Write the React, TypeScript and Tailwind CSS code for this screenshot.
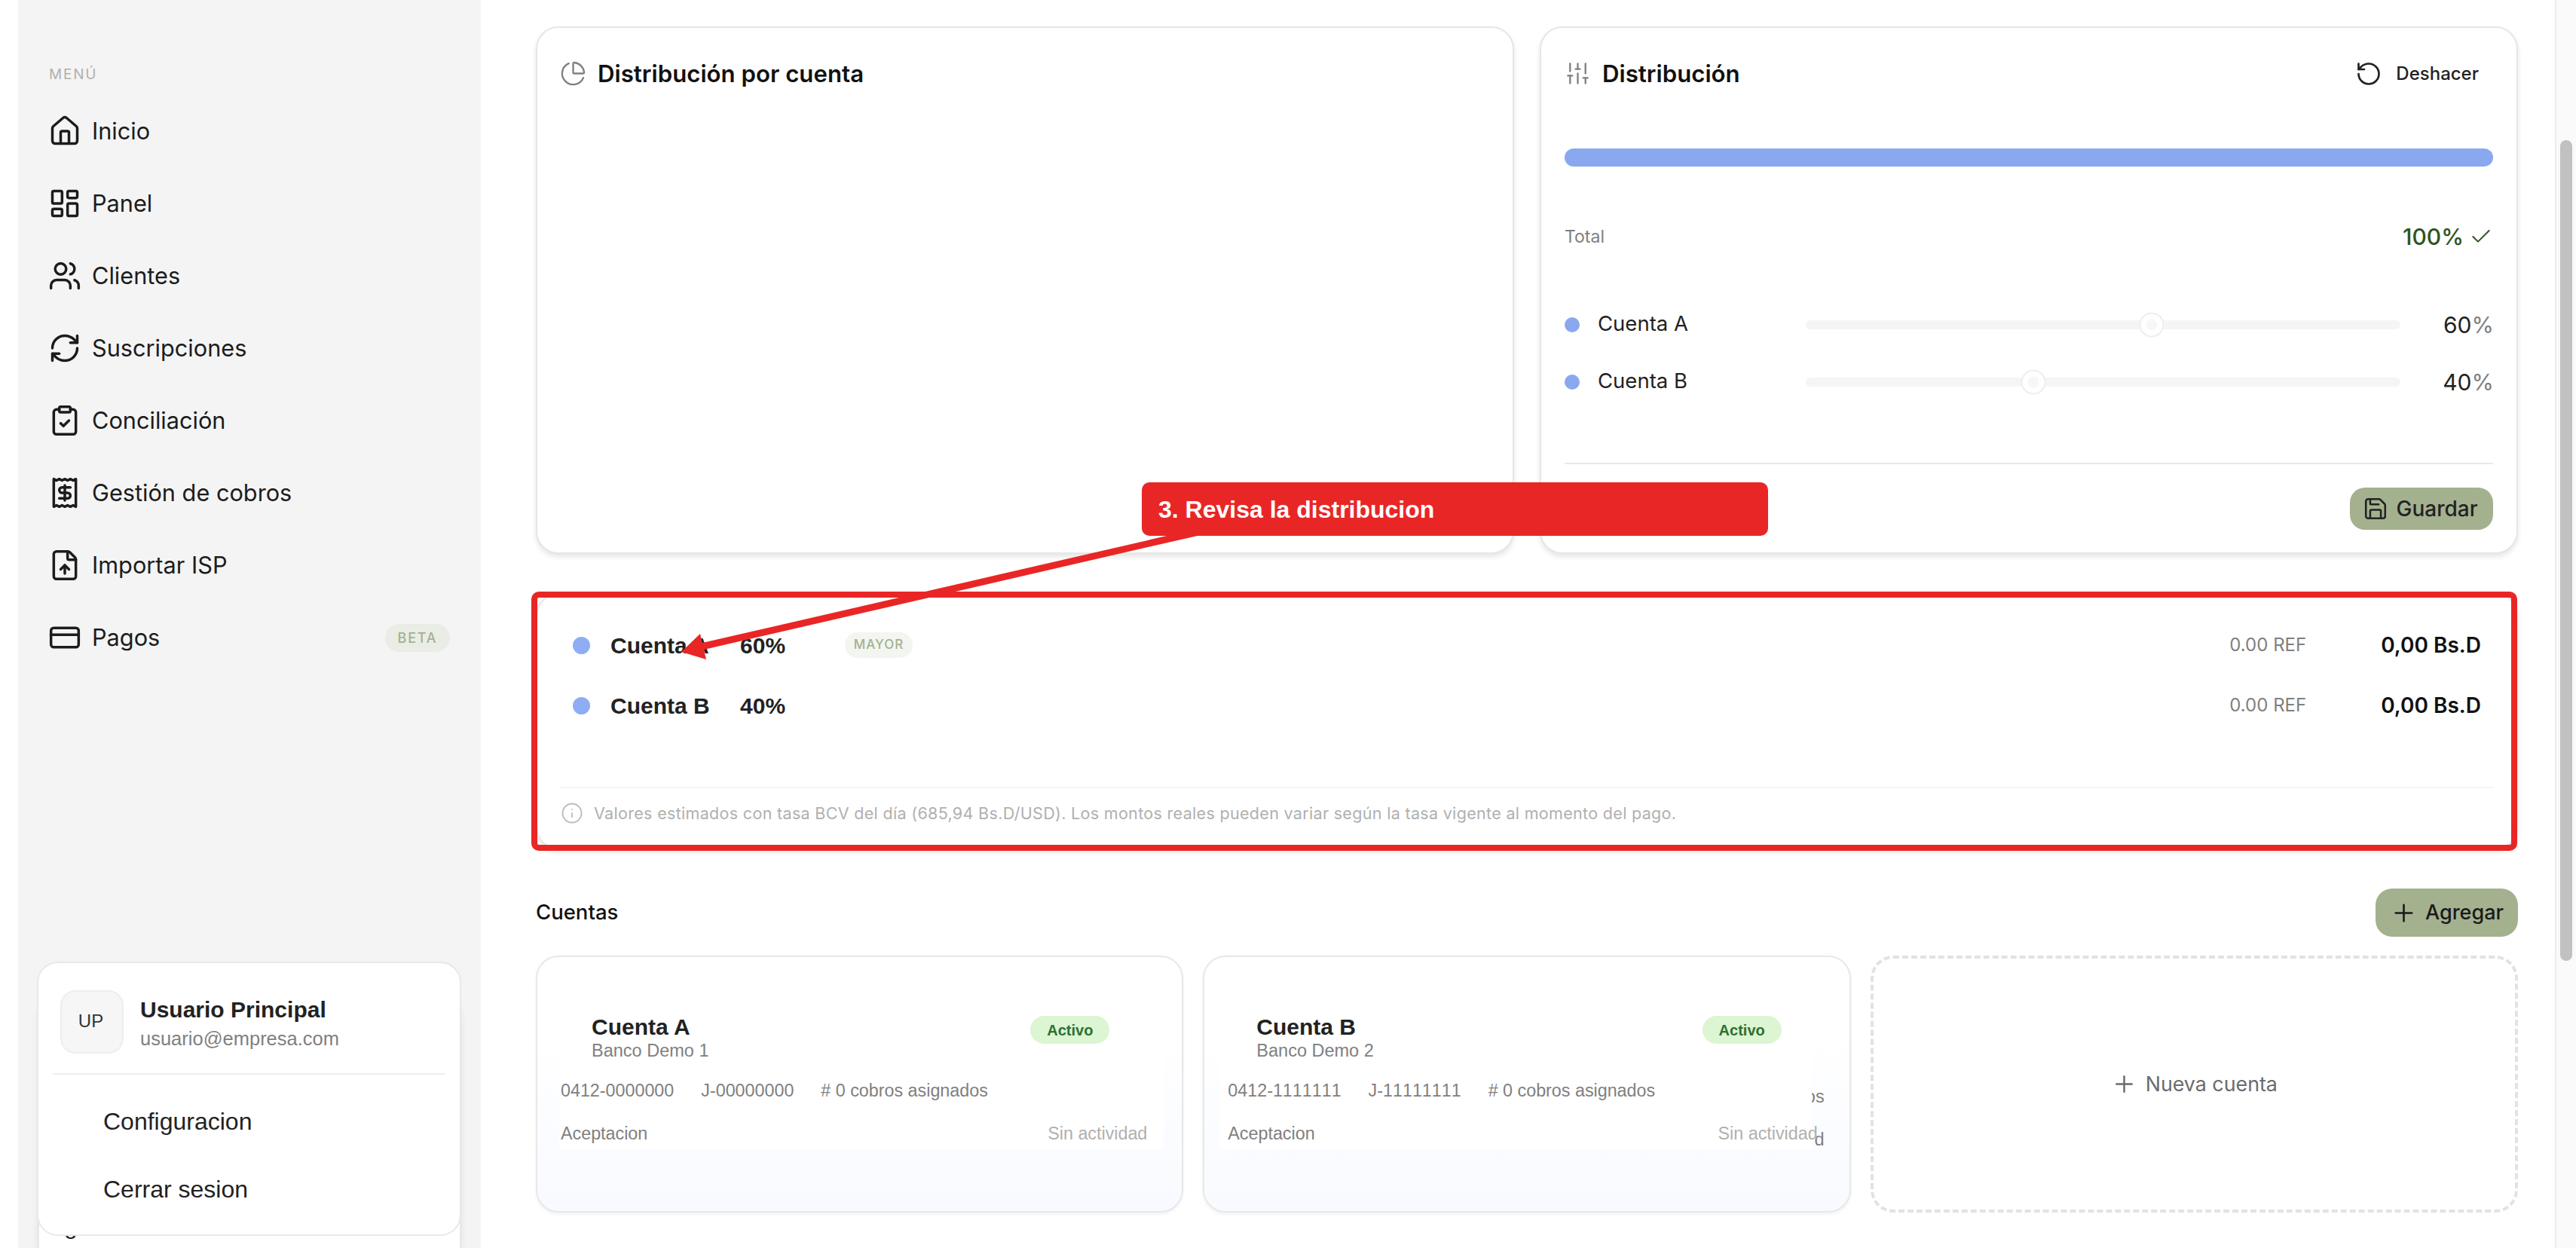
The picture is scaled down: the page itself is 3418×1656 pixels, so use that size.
import React from "react";
import {
  ChartPie,
  Check,
  ClipboardCheck,
  CreditCard,
  FileUp,
  House,
  Info,
  LayoutDashboard,
  Plus,
  Receipt,
  RefreshCw,
  RotateCcw,
  Save,
  SlidersVertical,
  Users,
} from "lucide-react";

const NAV = [
  { label: "Inicio", icon: House },
  { label: "Panel", icon: LayoutDashboard },
  { label: "Clientes", icon: Users },
  { label: "Suscripciones", icon: RefreshCw },
  { label: "Conciliación", icon: ClipboardCheck },
  { label: "Gestión de cobros", icon: Receipt },
  { label: "Importar ISP", icon: FileUp },
  { label: "Pagos", icon: CreditCard, beta: true },
];

const SPLITS = [
  { name: "Cuenta A", pct: 60, thumb: "58.2%", major: true },
  { name: "Cuenta B", pct: 40, thumb: "38.3%", major: false },
];

const ACCOUNTS = [
  {
    name: "Cuenta A",
    bank: "Banco Demo 1",
    phone: "0412-0000000",
    rif: "J-00000000",
    block: "ml-[29px] mr-[24px] pl-[2px] pr-[22px]",
    head: "pl-[41px] pr-[50px]",
    ghost: false,
  },
  {
    name: "Cuenta B",
    bank: "Banco Demo 2",
    phone: "0412-1111111",
    rif: "J-11111111",
    block: "ml-[20px] mr-[50px] pl-[11px] pr-0",
    head: "pl-[38px] pr-[40px]",
    ghost: true,
  },
];

function Sidebar() {
  return (
    <aside className="relative ml-[24px] flex h-full w-[614px] shrink-0 flex-col bg-[#f4f4f4] font-['Inter',sans-serif]">
      <div className="flex h-[126px] items-end pb-[16px] pl-[41px] text-[19px] leading-[22px] tracking-[1.8px] text-[#b0b0b0]">
        MENÚ
      </div>
      <nav className="flex flex-col pl-[40px] pr-[41px]">
        {NAV.map((item) => (
          <div key={item.label} className="flex h-[96px] items-center gap-[14px] text-[30.7px] text-[#1c1c1c]">
            <item.icon className="size-[44px] shrink-0" strokeWidth={1.9} />
            <span className="flex-1">{item.label}</span>
            {item.beta && (
              <span className="flex h-[37px] w-[86px] items-center justify-center rounded-full bg-[#e9ede6] text-[18px] font-medium tracking-[1.8px] text-[#a3b18f]">
                BETA
              </span>
            )}
          </div>
        ))}
      </nav>

      {/* chip del usuario, queda detras del menu abierto */}
      <div className="absolute inset-x-[26px] bottom-0 top-[1322px] rounded-t-[28px] border-2 border-b-0 border-[#e8e8e8] bg-white shadow-[0_2px_10px_rgba(0,0,0,0.08)]">
        <span className="absolute left-[33px] top-[284px] font-['Liberation_Sans',sans-serif] text-[32px] leading-[36px] text-[#222]">
          g
        </span>
      </div>

      <div className="absolute left-[25px] top-[1276px] flex h-[364px] w-[563px] flex-col rounded-[28px] border-2 border-[#e8e8e8] bg-white px-[19px] font-['Liberation_Sans',sans-serif]">
        <div className="flex h-[148px] items-center gap-[22px] border-b-2 border-[#eeeeee] pl-[10px] pb-[2px] pt-[12px]">
          <div className="flex size-[84px] items-center justify-center rounded-[20px] border-2 border-[#eeeeee] bg-[#f6f6f6] pb-[3px] pr-[3px] text-[24px] text-[#333]">
            UP
          </div>
          <div className="flex flex-col gap-[5px] pt-[2px]">
            <span className="text-[30px] font-bold leading-[36px] text-[#222]">Usuario Principal</span>
            <span className="text-[25.5px] leading-[30px] text-[#808080]">usuario@empresa.com</span>
          </div>
        </div>
        <div className="flex h-[90px] items-center pl-[67px] pt-[34px] text-[32px] text-[#222]">Configuracion</div>
        <div className="flex h-[90px] items-center pl-[67px] pt-[34px] text-[32px] text-[#222]">Cerrar sesion</div>
      </div>
    </aside>
  );
}

function CardHeader({ icon: Icon, title }: { icon: typeof ChartPie; title: string }) {
  return (
    <div className="flex items-center gap-[15px]">
      <Icon className="size-[35px] text-[#808080]" strokeWidth={1.6} />
      <span className="text-[31.2px] font-semibold text-[#111]">{title}</span>
    </div>
  );
}

function DistributionEditor() {
  return (
    <div className="flex flex-col rounded-[30px] border-2 border-[#e6e6e6] bg-white px-[31px] shadow-[0_4px_7px_rgba(0,0,0,0.1)]">
      <div className="flex h-[122px] items-center justify-between">
        <CardHeader icon={SlidersVertical} title="Distribución" />
        <div className="flex items-center gap-[18px] pr-[19px] text-[24px] font-medium text-[#222]">
          <RotateCcw className="size-[36px]" strokeWidth={1.8} />
          Deshacer
        </div>
      </div>
      <div className="mt-[38px] h-[24px] rounded-full bg-[#8aa8ef]" />
      <div className="mt-[73px] flex h-[40px] items-center justify-between">
        <span className="text-[23px] text-[#808080]">Total</span>
        <span className="flex items-center gap-[7px] text-[30px] font-medium text-[#2f5420]">
          100%
          <Check className="size-[32px]" strokeWidth={1.5} />
        </span>
      </div>
      <div className="mt-[77px] flex flex-col gap-[36px]">
        {SPLITS.map((s) => (
          <div key={s.name} className="flex h-[40px] items-center">
            <span className="size-[20px] rounded-full bg-[#8aa8ef]" />
            <span className="ml-[24px] w-[276px] pb-[3px] text-[27.5px] text-[#222]">{s.name}</span>
            <div className="relative h-[12px] flex-1 rounded-full bg-[#f5f5f5]">
              <span
                className="absolute top-1/2 size-[33px] -translate-x-1/2 -translate-y-1/2 rounded-full border-2 border-[#eeeeee] bg-white"
                style={{ left: s.thumb }}
              >
                <span className="absolute inset-[7px] rounded-full bg-[#f7f7f7]" />
              </span>
            </div>
            <span className="-mr-[1px] w-[124px] text-right text-[30px] text-[#222]">
              {s.pct}
              <span className="text-[#808080]">%</span>
            </span>
          </div>
        ))}
      </div>
      <div className="mt-[87px] h-[2px] bg-[#e8e8e8]" />
      <div className="mt-[31px] flex justify-end">
        <div className="flex h-[56px] w-[190px] items-center justify-center gap-[10px] rounded-[20px] bg-[#a3b18f] pr-[3px] text-[28px] font-medium text-[#222]">
          <Save className="size-[34px]" strokeWidth={1.8} />
          Guardar
        </div>
      </div>
    </div>
  );
}

function Summary() {
  return (
    <div className="relative mt-[52px] flex h-[340px] flex-col rounded-[30px] border-2 border-[#e8e8e8] bg-white px-[31px] pt-[43px] shadow-[0_4px_8px_rgba(0,0,0,0.1)]">
      <div className="flex flex-col gap-[32px] px-[16px] font-['Liberation_Sans',sans-serif]">
        {SPLITS.map((s) => (
          <div key={s.name} className="flex h-[48px] items-center">
            <span className="size-[23px] rounded-full bg-[#8fadf5]" />
            <span className="ml-[27px] w-[172px] text-[30px] font-bold text-[#222]">{s.name}</span>
            <span className="w-[60px] text-[30px] font-bold text-[#222]">{s.pct}%</span>
            {s.major && (
              <span className="ml-[79px] flex h-[34px] w-[90px] items-center justify-center rounded-full bg-[#f3f5f1] font-['Inter',sans-serif] text-[17px] font-medium tracking-[1px] text-[#a3b18f]">
                MAYOR
              </span>
            )}
            <span className="ml-auto font-['Inter',sans-serif] text-[24px] text-[#808080]">0.00 REF</span>
            <span className="ml-[99px] font-['Inter',sans-serif] text-[28px] font-semibold text-[#111]">0,00 Bs.D</span>
          </div>
        ))}
      </div>
      <div className="mt-[84px] h-[2px] bg-[#f4f4f4]" />
      <div className="mt-[13px] flex h-[40px] items-center gap-[14px] text-[21.5px] tracking-[0.32px] text-[#b0b0b0]">
        <Info className="size-[30px] shrink-0 text-[#bbbbbb]" strokeWidth={1.5} />
        Valores estimados con tasa BCV del día (685,94 Bs.D/USD). Los montos reales pueden variar según la tasa vigente al momento del pago.
      </div>
    </div>
  );
}

function AccountCard({ account }: { account: (typeof ACCOUNTS)[number] }) {
  return (
    <div className="relative h-[341px] rounded-[30px] border-2 border-[#e8e8e8] bg-linear-to-b from-white from-30% to-[#f8faff] pt-[50px] font-['Liberation_Sans',sans-serif] shadow-[0_2px_4px_rgba(0,0,0,0.06)]">
      {account.ghost && (
        <>
          <span className="absolute right-[33px] top-[168px] text-[23.5px] text-[#808080]">os</span>
          <span className="absolute right-[33px] top-[225px] text-[23.5px] text-[#808080]">d</span>
        </>
      )}
      <div className={`relative flex h-[205px] flex-col bg-white pt-[26px] ${account.block}`}>
        <div className={`flex items-start justify-between ${account.head}`}>
          <div className="flex flex-col">
            <span className="text-[30px] font-bold leading-[34px] text-[#222]">{account.name}</span>
            <span className="text-[23.5px] leading-[28px] text-[#808080]">{account.bank}</span>
          </div>
          <span className="mt-[2px] flex h-[37px] w-[105px] items-center justify-center rounded-full bg-[#dcf5d3] text-[20px] font-bold text-[#2f6f2f]">
            Activo
          </span>
        </div>
        <div className="mt-[24px] flex h-[30px] items-center gap-[36px] text-[23.3px] text-[#808080] [font-kerning:none]">
          <span>{account.phone}</span>
          <span>{account.rif}</span>
          <span># 0 cobros asignados</span>
        </div>
        <div className={`mt-[27px] flex h-[30px] items-center justify-between text-[23.3px] ${account.ghost ? "-mr-[8px]" : ""}`}>
          <span className="text-[#808080]">Aceptacion</span>
          <span className="text-[#b0b0b0]">Sin actividad</span>
        </div>
      </div>
    </div>
  );
}

export default function App() {
  return (
    <div className="relative flex h-[1656px] w-[3418px] overflow-hidden bg-white font-['Inter',sans-serif]">
      <Sidebar />

      <main className="flex-1 pl-[73px] pr-[49px] pt-[35px]">
        <div className="grid h-[700px] grid-cols-2 gap-[34px]">
          <div className="rounded-[30px] border-2 border-[#e6e6e6] bg-white pl-[30px] shadow-[0_4px_7px_rgba(0,0,0,0.1)]">
            <div className="flex h-[122px] items-center">
              <CardHeader icon={ChartPie} title="Distribución por cuenta" />
            </div>
          </div>
          <DistributionEditor />
        </div>

        <Summary />

        <div className="mt-[52px] flex h-[64px] items-center justify-between">
          <span className="text-[27.5px] font-medium text-[#111]">Cuentas</span>
          <div className="flex h-[64px] w-[189px] items-center justify-center gap-[10px] rounded-[22px] bg-[#a3b18f] text-[27px] font-medium text-[#1a1a1a]">
            <Plus className="size-[37px]" strokeWidth={1.7} />
            Agregar
          </div>
        </div>

        <div className="mt-[25px] grid grid-cols-3 gap-[26px]">
          {ACCOUNTS.map((a) => (
            <AccountCard key={a.name} account={a} />
          ))}
          <div className="flex h-[341px] items-center justify-center gap-[11px] rounded-[30px] border-[4px] border-dashed border-[#e2e2e2] text-[26.8px] text-[#6b6b6b]">
            <Plus className="size-[35px]" strokeWidth={1.7} />
            Nueva cuenta
          </div>
        </div>
      </main>

      {/* barra de scroll */}
      <div className="w-[28px] shrink-0 border-l-2 border-[#ececec] bg-[#fafafa] pl-[5px] pt-[186px]">
        <div className="h-[1089px] w-[16px] rounded-full bg-[#c1c1c1]" />
      </div>

      {/* anotacion del tutorial */}
      <div className="pointer-events-none absolute left-[705px] top-[785px] h-[344px] w-[2635px] rounded-[10px] border-[8px] border-[#e92626]" />
      <svg className="pointer-events-none absolute left-0 top-0" width="3418" height="1656">
        <line x1="1590" y1="706" x2="922" y2="860" stroke="#e92626" strokeWidth="9" />
        <polygon points="904,865 929,841 937,875" fill="#e92626" />
      </svg>
      <div className="absolute left-[1515px] top-[640px] flex h-[71px] w-[831px] items-center rounded-[10px] bg-[#e92626] pl-[22px] font-['Liberation_Sans',sans-serif] text-[32px] font-bold text-white">
        3. Revisa la distribucion
      </div>
    </div>
  );
}
